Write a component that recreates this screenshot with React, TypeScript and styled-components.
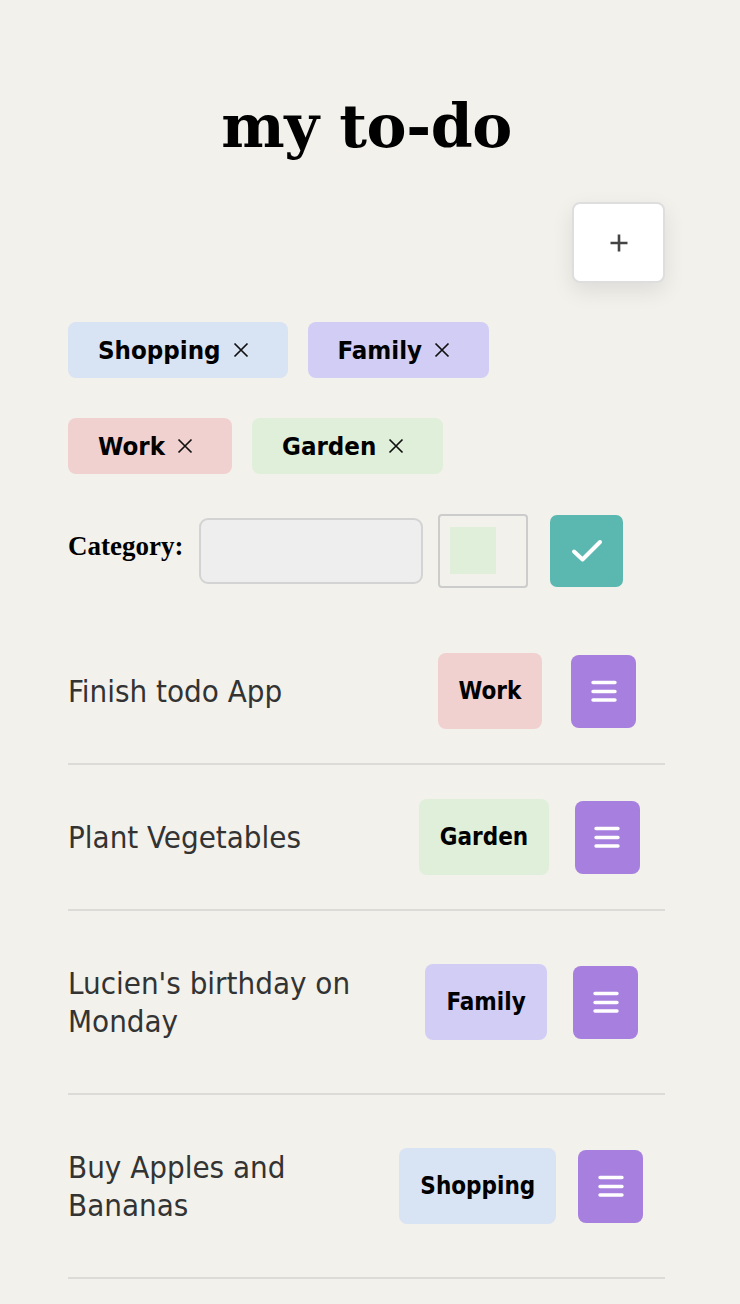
import React from "react";
import styled, { createGlobalStyle } from "styled-components";

const GlobalStyle = createGlobalStyle`
  html, body {
    margin: 0;
    padding: 0;
    background: #f2f1ec;
  }
  * { box-sizing: border-box; }
`;

const Main = styled.main`
  width: 597px;
  margin-left: 68px;
  display: flex;
  flex-direction: column;
`;

const Title = styled.h1`
  margin: 91px 0 0;
  font-family: "DejaVu Serif", "Liberation Serif", serif;
  font-weight: 700;
  font-size: 60px;
  line-height: 70px;
  text-align: center;
  color: #000;
  letter-spacing: -0.4px;
`;

const Toolbar = styled.div`
  display: flex;
  justify-content: flex-end;
  margin-top: 41px;
`;

const AddButton = styled.button`
  width: 93px;
  height: 81px;
  display: flex;
  align-items: center;
  justify-content: center;
  background: #fff;
  border: 2px solid #dedede;
  border-radius: 8px;
  box-shadow: 0 8px 22px rgba(0, 0, 0, 0.09);
  padding: 0;
  cursor: pointer;
`;

const CategoryList = styled.div`
  display: flex;
  flex-wrap: wrap;
  column-gap: 20px;
  row-gap: 40px;
  margin-top: 39px;
`;

const CategoryChip = styled.div<{ $bg: string }>`
  height: 56px;
  display: flex;
  align-items: center;
  gap: 6px;
  padding: 0 33px 0 30px;
  background: ${(p) => p.$bg};
  border-radius: 8px;
  font-family: "DejaVu Sans Condensed", "DejaVu Sans", sans-serif;
  font-weight: 700;
  font-size: 25.6px;
  color: #000;
`;

const RemoveButton = styled.button`
  display: flex;
  align-items: center;
  justify-content: center;
  width: 28px;
  height: 28px;
  padding: 0;
  border: none;
  background: transparent;
  cursor: pointer;
`;

const CategoryForm = styled.form`
  display: flex;
  align-items: center;
  margin-top: 40px;
  height: 74px;
`;

const Label = styled.label`
  font-family: "Liberation Serif", serif;
  font-weight: 700;
  font-size: 27px;
  color: #000;
  margin-right: 16px;
  margin-top: -10px;
`;

const TextInput = styled.input`
  width: 224px;
  height: 66px;
  background: #eeeeee;
  border: 2px solid #d3d3d3;
  border-radius: 9px;
  margin-right: 15px;
  outline: none;
`;

const ColorPicker = styled.div`
  width: 90px;
  height: 74px;
  border: 2px solid #cccccc;
  border-radius: 4px;
  padding: 11px 0 0 10px;
  margin-right: 22px;
`;

const Swatch = styled.div<{ $bg: string }>`
  width: 46px;
  height: 47px;
  background: ${(p) => p.$bg};
`;

const ConfirmButton = styled.button`
  width: 73px;
  height: 72px;
  display: flex;
  align-items: center;
  justify-content: center;
  background: #5bb8b1;
  border: none;
  border-radius: 7px;
  padding: 0;
  cursor: pointer;
`;

const TodoList = styled.ul`
  list-style: none;
  margin: 31px 0 0;
  padding: 0;
`;

const TodoItem = styled.li`
  display: flex;
  align-items: center;
  padding: 23px 0;
  border-bottom: 2px solid #dcdbd7;
`;

const TodoText = styled.p`
  flex: 3 1 211px;
  margin: 30px 0;
  font-family: "DejaVu Sans Condensed", "DejaVu Sans", sans-serif;
  font-size: 31px;
  line-height: 38px;
  color: #333;
`;

const Actions = styled.div`
  flex: 2 1 auto;
  display: flex;
  align-items: center;
  justify-content: space-evenly;
`;

const TodoTag = styled.span<{ $bg: string }>`
  height: 76px;
  display: flex;
  align-items: center;
  padding: 0 21px;
  background: ${(p) => p.$bg};
  border-radius: 8px;
  font-family: "DejaVu Sans Condensed", "DejaVu Sans", sans-serif;
  font-weight: 700;
  font-size: 24px;
  color: #000;
`;

const MenuButton = styled.button`
  width: 65px;
  height: 73px;
  display: flex;
  align-items: center;
  justify-content: center;
  background: #a77fde;
  border: none;
  border-radius: 8px;
  padding: 0;
  cursor: pointer;
`;

const colors: Record<string, string> = {
  Shopping: "#d8e3f3",
  Family: "#d2cdf5",
  Work: "#f0d1d0",
  Garden: "#e0efd9",
};

const categories = ["Shopping", "Family", "Work", "Garden"];

const todos = [
  { text: "Finish todo App", cat: "Work" },
  { text: "Plant Vegetables", cat: "Garden" },
  { text: "Lucien's birthday on Monday", cat: "Family" },
  { text: "Buy Apples and Bananas", cat: "Shopping" },
];

const PlusIcon = () => (
  <svg width="20" height="20" viewBox="0 0 20 20">
    <path d="M10 1.5v17M1.5 10h17" stroke="#444" strokeWidth="2.6" fill="none" />
  </svg>
);

const CrossIcon = () => (
  <svg width="16" height="16" viewBox="0 0 16 16">
    <path d="M1.5 1.5l13 13M14.5 1.5l-13 13" stroke="#111" strokeWidth="1.7" fill="none" />
  </svg>
);

const CheckIcon = () => (
  <svg width="32" height="26" viewBox="0 0 32 26">
    <path d="M3 13.5l8.5 8L29 4" stroke="#fff" strokeWidth="4" strokeLinecap="round" strokeLinejoin="round" fill="none" />
  </svg>
);

const MenuIcon = () => (
  <svg width="28" height="24" viewBox="0 0 28 24">
    <path d="M3 3.5h22M3 12.5h22M3 21h22" stroke="#fff" strokeWidth="3.4" strokeLinecap="round" fill="none" />
  </svg>
);

export default function App() {
  return (
    <>
      <GlobalStyle />
      <Main>
        <Title>my to-do</Title>
        <Toolbar>
          <AddButton aria-label="Add todo">
            <PlusIcon />
          </AddButton>
        </Toolbar>
        <CategoryList>
          {categories.map((c) => (
            <CategoryChip key={c} $bg={colors[c]}>
              {c}
              <RemoveButton aria-label={`Remove ${c}`}>
                <CrossIcon />
              </RemoveButton>
            </CategoryChip>
          ))}
        </CategoryList>
        <CategoryForm onSubmit={(e) => e.preventDefault()}>
          <Label htmlFor="cat">Category:</Label>
          <TextInput id="cat" type="text" />
          <ColorPicker>
            <Swatch $bg="#e0efd9" />
          </ColorPicker>
          <ConfirmButton type="submit" aria-label="Add category">
            <CheckIcon />
          </ConfirmButton>
        </CategoryForm>
        <TodoList>
          {todos.map((t) => (
            <TodoItem key={t.text}>
              <TodoText>{t.text}</TodoText>
              <Actions>
                <TodoTag $bg={colors[t.cat]}>{t.cat}</TodoTag>
                <MenuButton aria-label="Menu">
                  <MenuIcon />
                </MenuButton>
              </Actions>
            </TodoItem>
          ))}
        </TodoList>
      </Main>
    </>
  );
}
